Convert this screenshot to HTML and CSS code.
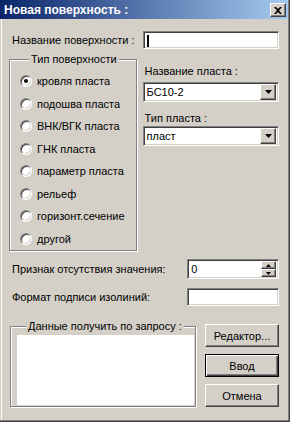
FILE: index.html
```html
<!DOCTYPE html>
<html lang="ru">

<head>
    <meta charset="UTF-8">
    <title>Новая поверхность</title>
    <link rel="stylesheet" href="styles.css">
</head>

<body>
    <div class="window">
        <div class="titlebar">
            <span class="title">Новая поверхность :</span>
            <span class="close">
                <svg width="8" height="7" viewBox="0 0 8 7"><path d="M0 0h2l2 2 2-2h2l-3 3.5 3 3.5h-2l-2-2-2 2h-2l3-3.5z" fill="#000"/></svg>
            </span>
        </div>

        <div class="content">
            <div class="row name-row">
                <span class="label name-label">Название поверхности :</span>
                <div class="field name-field"><span class="caret"></span></div>
            </div>

            <div class="middle">
                <fieldset class="group type-group">
                    <legend>Тип поверхности</legend>
                    <div class="radio checked"><span class="dot"></span>кровля пласта</div>
                    <div class="radio"><span class="dot"></span>подошва пласта</div>
                    <div class="radio"><span class="dot"></span>ВНК/ВГК пласта</div>
                    <div class="radio"><span class="dot"></span>ГНК пласта</div>
                    <div class="radio"><span class="dot"></span>параметр пласта</div>
                    <div class="radio"><span class="dot"></span>рельеф</div>
                    <div class="radio"><span class="dot"></span>горизонт.сечение</div>
                    <div class="radio"><span class="dot"></span>другой</div>
                </fieldset>

                <div class="side">
                    <div class="label side-label">Название пласта :</div>
                    <div class="field combo">
                        <span class="combo-text">БС10-2</span>
                        <span class="drop"><svg width="7" height="4" viewBox="0 0 7 4"><path d="M0 0h7l-3.5 4z" fill="#000"/></svg></span>
                    </div>
                    <div class="label side-label second">Тип пласта :</div>
                    <div class="field combo combo-second">
                        <span class="combo-text">пласт</span>
                        <span class="drop"><svg width="7" height="4" viewBox="0 0 7 4"><path d="M0 0h7l-3.5 4z" fill="#000"/></svg></span>
                    </div>
                </div>
            </div>

            <div class="row spin-row">
                <span class="label wide-label">Признак отсутствия значения:</span>
                <div class="field spin">
                    <span class="spin-text">0</span>
                    <span class="spin-btns">
                        <span class="spin-btn"><svg width="5" height="3" viewBox="0 0 5 3"><path d="M2.5 0l2.5 3h-5z" fill="#000"/></svg></span>
                        <span class="spin-btn"><svg width="5" height="3" viewBox="0 0 5 3"><path d="M0 0h5l-2.5 3z" fill="#000"/></svg></span>
                    </span>
                </div>
            </div>

            <div class="row format-row">
                <span class="label wide-label">Формат подписи изолиний:</span>
                <div class="field format-field"></div>
            </div>

            <div class="bottom">
                <fieldset class="group query-group">
                    <legend>Данные получить по запросу :</legend>
                    <div class="list"></div>
                </fieldset>
                <div class="buttons">
                    <div class="btn">Редактор...</div>
                    <div class="btn default">Ввод</div>
                    <div class="btn">Отмена</div>
                </div>
            </div>
        </div>
    </div>
</body>

</html>
```

FILE: styles.css
```css
body {
    margin: 0;
    background-color: #d4d0c8;
    font-family: "Liberation Sans", Arial, sans-serif;
    font-size: 11px;
    color: #000;
}

.window {
    width: 290px;
    height: 422px;
    box-sizing: border-box;
    background-color: #d4d0c8;
    border-right: 1px solid #404040;
    border-bottom: 1px solid #404040;
    box-shadow: inset -1px -1px #808080, inset 1px 0 #d4d0c8, inset 2px 0 #fff;
}

.titlebar {
    height: 19px;
    margin-right: 1px;
    padding: 0 2px 0 4px;
    display: flex;
    align-items: center;
    justify-content: space-between;
    background: linear-gradient(to right, #0a246a, #a6caf0);
}

.title {
    color: #fff;
    font-weight: bold;
    font-size: 12px;
    line-height: 14px;
}

.close {
    width: 16px;
    height: 14px;
    box-sizing: border-box;
    display: flex;
    align-items: center;
    justify-content: center;
    background-color: #d4d0c8;
    border: 1px solid;
    border-color: #fff #404040 #404040 #fff;
    box-shadow: inset -1px -1px #808080;
    margin-top: 1px;
}

.content {
    padding: 12px 10px 0 9px;
}

.label {
    line-height: 14px;
    white-space: nowrap;
}

.field {
    background-color: #fff;
    box-sizing: border-box;
    border: 1px solid;
    border-color: #808080 #fff #fff #808080;
    box-shadow: inset 1px 1px #404040, inset -1px -1px #d4d0c8;
}

.row {
    display: flex;
    align-items: center;
}

.name-label {
    width: 134px;
    padding-left: 3px;
    box-sizing: border-box;
}

.name-field {
    width: 137px;
    height: 18px;
    padding: 3px 0 0 3px;
}

.caret {
    display: block;
    width: 2px;
    height: 12px;
    background-color: #000;
}

.middle {
    display: flex;
    align-items: flex-start;
}

.group {
    margin: 0;
    padding: 0;
    min-width: 0;
    border: 1px solid #808080;
    box-shadow: 1px 1px #fff, inset 1px 1px #fff;
}

.group legend {
    margin-left: 9px;
    padding: 0 2px;
    line-height: 14px;
    white-space: nowrap;
    background-color: #d4d0c8;
}

.type-group {
    width: 128px;
    box-sizing: border-box;
    margin-top: 3px;
    padding: 4px 0 0 10px;
}

.radio {
    height: 22.5px;
    display: flex;
    align-items: center;
    white-space: nowrap;
}

.dot {
    width: 12px;
    height: 12px;
    box-sizing: border-box;
    margin-right: 5px;
    flex-shrink: 0;
    border-radius: 50%;
    background-color: #fff;
    border: 1px solid;
    border-color: #808080 #fff #fff #808080;
    box-shadow: inset 1px 1px #404040, inset -1px -1px #d4d0c8;
    display: flex;
    align-items: center;
    justify-content: center;
}

.checked .dot::after {
    content: "";
    width: 4px;
    height: 4px;
    border-radius: 50%;
    background-color: #000;
}

.side {
    margin-left: 6px;
    margin-top: 15px;
    width: 137px;
}

.side-label {
    padding-left: 2px;
    margin-bottom: 4px;
}

.side-label.second {
    margin-top: 9px;
    margin-bottom: 1px;
}

.combo {
    height: 20px;
    display: flex;
    align-items: center;
    justify-content: space-between;
    padding: 2px 2px 2px 3px;
}

.drop {
    width: 16px;
    height: 16px;
    box-sizing: border-box;
    display: flex;
    align-items: center;
    justify-content: center;
    background-color: #d4d0c8;
    border: 1px solid;
    border-color: #fff #404040 #404040 #fff;
    box-shadow: inset -1px -1px #808080;
}

.spin-row {
    margin-top: 8px;
}

.wide-label {
    width: 179px;
    padding-left: 3px;
    box-sizing: border-box;
}

.spin {
    width: 92px;
    height: 20px;
    display: flex;
    align-items: center;
    justify-content: space-between;
    padding: 2px 2px 2px 3px;
}

.spin-btns {
    display: flex;
    flex-direction: column;
}

.spin-btn {
    width: 15px;
    height: 8px;
    box-sizing: border-box;
    display: flex;
    align-items: center;
    justify-content: center;
    background-color: #d4d0c8;
    border: 1px solid;
    border-color: #fff #404040 #404040 #fff;
    box-shadow: inset -1px -1px #808080;
}

.format-row {
    margin-top: 9px;
}

.format-field {
    width: 92px;
    height: 18px;
}

.bottom {
    display: flex;
    align-items: flex-start;
    margin-top: 13px;
}

.query-group {
    width: 187px;
    box-sizing: border-box;
    margin-left: 1px;
    padding: 2px 1px 1px 6px;
}

.list {
    height: 70px;
    background-color: #fff;
}

.buttons {
    margin-left: 9px;
    margin-top: 5px;
    display: flex;
    flex-direction: column;
    gap: 7px;
}

.btn {
    width: 74px;
    height: 23px;
    box-sizing: border-box;
    display: flex;
    align-items: center;
    justify-content: center;
    background-color: #d4d0c8;
    border: 1px solid;
    border-color: #fff #404040 #404040 #fff;
    box-shadow: inset -1px -1px #808080;
}

.btn.default {
    border-color: #000;
    box-shadow: inset 1px 1px #fff, inset -1px -1px #404040, inset -2px -2px #808080;
}
```
